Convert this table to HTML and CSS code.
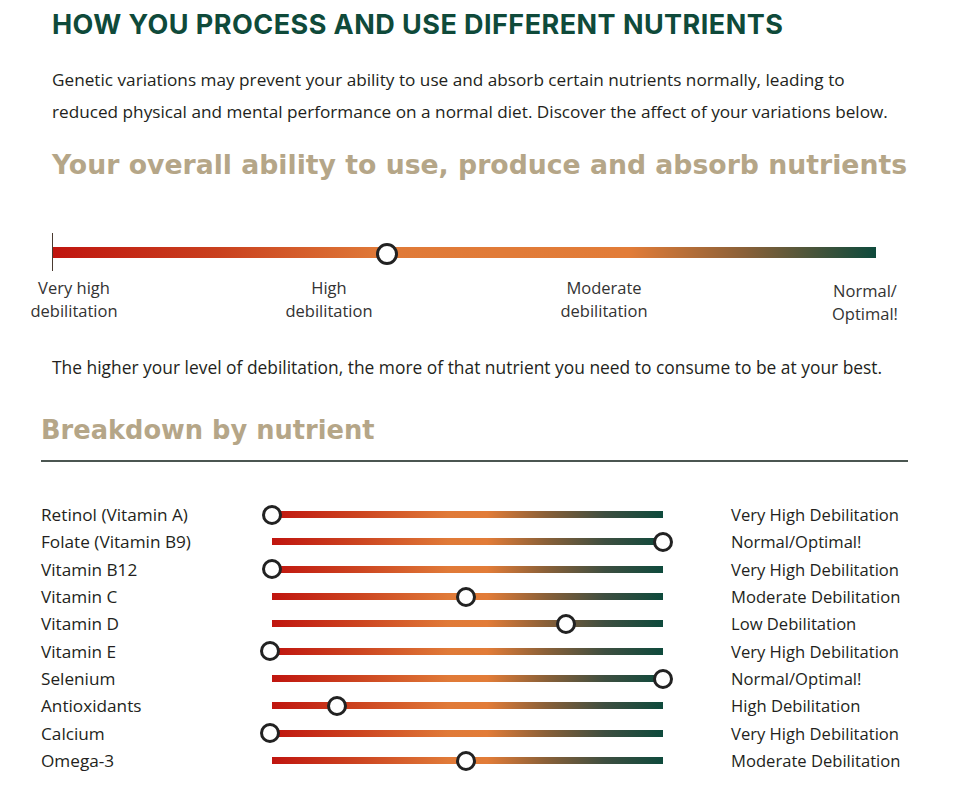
FILE: index.html
```html
<!DOCTYPE html>
<html lang="en">
<head>
<meta charset="utf-8">
<title>How you process and use different nutrients</title>
<link rel="stylesheet" href="styles.css">
</head>
<body>
<main class="page">
  <h1 class="title">HOW YOU PROCESS AND USE DIFFERENT NUTRIENTS</h1>
  <p class="intro">Genetic variations may prevent your ability to use and absorb certain nutrients normally, leading to reduced physical and mental performance on a normal diet. Discover the affect of your variations below.</p>
  <h2 class="overall-title">Your overall ability to use, produce and absorb nutrients</h2>

  <section class="overall">
    <div class="overall-track">
      <span class="tick"></span>
      <div class="overall-bar"></div>
      <span class="knob knob-lg" style="left: 40.6%"></span>
    </div>
    <div class="overall-labels">
      <span class="lbl lbl-1">Very high<br>debilitation</span>
      <span class="lbl lbl-2">High<br>debilitation</span>
      <span class="lbl lbl-3">Moderate<br>debilitation</span>
      <span class="lbl lbl-4">Normal/<br>Optimal!</span>
    </div>
  </section>

  <p class="note">The higher your level of debilitation, the more of that nutrient you need to consume to be at your best.</p>

  <h2 class="breakdown-title">Breakdown by nutrient</h2>

  <ul class="rows">
    <li class="row"><span class="name">Retinol (Vitamin A)</span><span class="track"><span class="knob" style="left: 0%"></span></span><span class="status">Very High Debilitation</span></li>
    <li class="row"><span class="name">Folate (Vitamin B9)</span><span class="track"><span class="knob" style="left: 100%"></span></span><span class="status">Normal/Optimal!</span></li>
    <li class="row"><span class="name">Vitamin B12</span><span class="track"><span class="knob" style="left: 0%"></span></span><span class="status">Very High Debilitation</span></li>
    <li class="row"><span class="name">Vitamin C</span><span class="track"><span class="knob" style="left: 49.6%"></span></span><span class="status">Moderate Debilitation</span></li>
    <li class="row"><span class="name">Vitamin D</span><span class="track"><span class="knob" style="left: 75.2%"></span></span><span class="status">Low Debilitation</span></li>
    <li class="row"><span class="name">Vitamin E</span><span class="track"><span class="knob" style="left: -0.5%"></span></span><span class="status">Very High Debilitation</span></li>
    <li class="row"><span class="name">Selenium</span><span class="track"><span class="knob" style="left: 100%"></span></span><span class="status">Normal/Optimal!</span></li>
    <li class="row"><span class="name">Antioxidants</span><span class="track"><span class="knob" style="left: 16.6%"></span></span><span class="status">High Debilitation</span></li>
    <li class="row"><span class="name">Calcium</span><span class="track"><span class="knob" style="left: -0.5%"></span></span><span class="status">Very High Debilitation</span></li>
    <li class="row"><span class="name">Omega-3</span><span class="track"><span class="knob" style="left: 49.6%"></span></span><span class="status">Moderate Debilitation</span></li>
  </ul>
</main>
</body>
</html>
```

FILE: styles.css
```css
* { box-sizing: border-box; }

html, body {
  margin: 0;
  padding: 0;
  background: #ffffff;
}

body {
  font-family: "Open Sans", "Liberation Sans", sans-serif;
  color: #231f20;
}

.page {
  width: 969px;
  padding: 8px 0 0 0;
}

.title {
  margin: 0 0 0 52px;
  font-family: Inter, "Open Sans", sans-serif;
  font-weight: 700;
  font-size: 27px;
  line-height: 34px;
  color: #0f4a3a;
  letter-spacing: 0.45px;
}

.intro {
  margin: 22px 0 0 52px;
  width: 852px;
  font-size: 17.2px;
  line-height: 32px;
  color: #231f20;
}

.overall-title {
  margin: 20px 0 0 52px;
  font-family: "DejaVu Sans", Verdana, sans-serif;
  font-weight: 700;
  font-size: 26.7px;
  line-height: 34px;
  color: #b5a688;
}

.overall {
  margin: 51px 0 0 0;
}

.overall-track {
  position: relative;
  margin-left: 52px;
  width: 824px;
  height: 38px;
  display: flex;
  align-items: center;
}

.overall-bar {
  width: 100%;
  height: 11px;
  background: linear-gradient(to right,
    #c0150f 0%,
    #c9401e 20%,
    #e07a38 40%,
    #e27c38 70%,
    #8a6038 84%,
    #0e4a3c 100%);
}

.tick {
  position: absolute;
  left: 0;
  top: 0;
  width: 1px;
  height: 38px;
  background: #4a3a30;
}

.knob {
  position: absolute;
  top: 50%;
  width: 20px;
  height: 20px;
  margin: -10px 0 0 -10px;
  border: 3px solid #222222;
  border-radius: 50%;
  background: #ffffff;
}

.knob-lg {
  width: 22px;
  height: 22px;
  margin: -9px 0 0 -11px;
}

.overall-labels {
  position: relative;
  height: 50px;
  margin-top: 5px;
  font-size: 16.5px;
  line-height: 23px;
  color: #333333;
}

.lbl {
  position: absolute;
  top: 0;
  width: 140px;
  text-align: center;
}

.lbl-1 { left: 4px; }
.lbl-2 { left: 259px; }
.lbl-3 { left: 534px; }
.lbl-4 { left: 795px; top: 3px; }

.note {
  margin: 29px 0 0 52px;
  font-size: 17.4px;
  line-height: 24px;
}

.breakdown-title {
  margin: 35px 0 0 41px;
  width: 867px;
  padding-bottom: 14px;
  border-bottom: 2px solid #4b5651;
  font-family: "DejaVu Sans", Verdana, sans-serif;
  font-weight: 700;
  font-size: 25.7px;
  line-height: 32px;
  color: #b5a688;
}

.rows {
  list-style: none;
  margin: 39px 0 0 41px;
  padding: 0;
}

.row {
  display: flex;
  align-items: center;
  height: 27.33px;
  color: #231f20;
}

.name {
  width: 231px;
  flex: none;
  font-size: 17.2px;
}

.track {
  position: relative;
  width: 391px;
  height: 7px;
  flex: none;
  background: linear-gradient(to right,
    #c0150f 0%,
    #cc4420 22%,
    #e07a38 45%,
    #e27c38 55%,
    #8a6038 70%,
    #3e4e40 85%,
    #0e4a3c 100%);
}

.status {
  margin-left: 68px;
  font-size: 16.6px;
}
```
